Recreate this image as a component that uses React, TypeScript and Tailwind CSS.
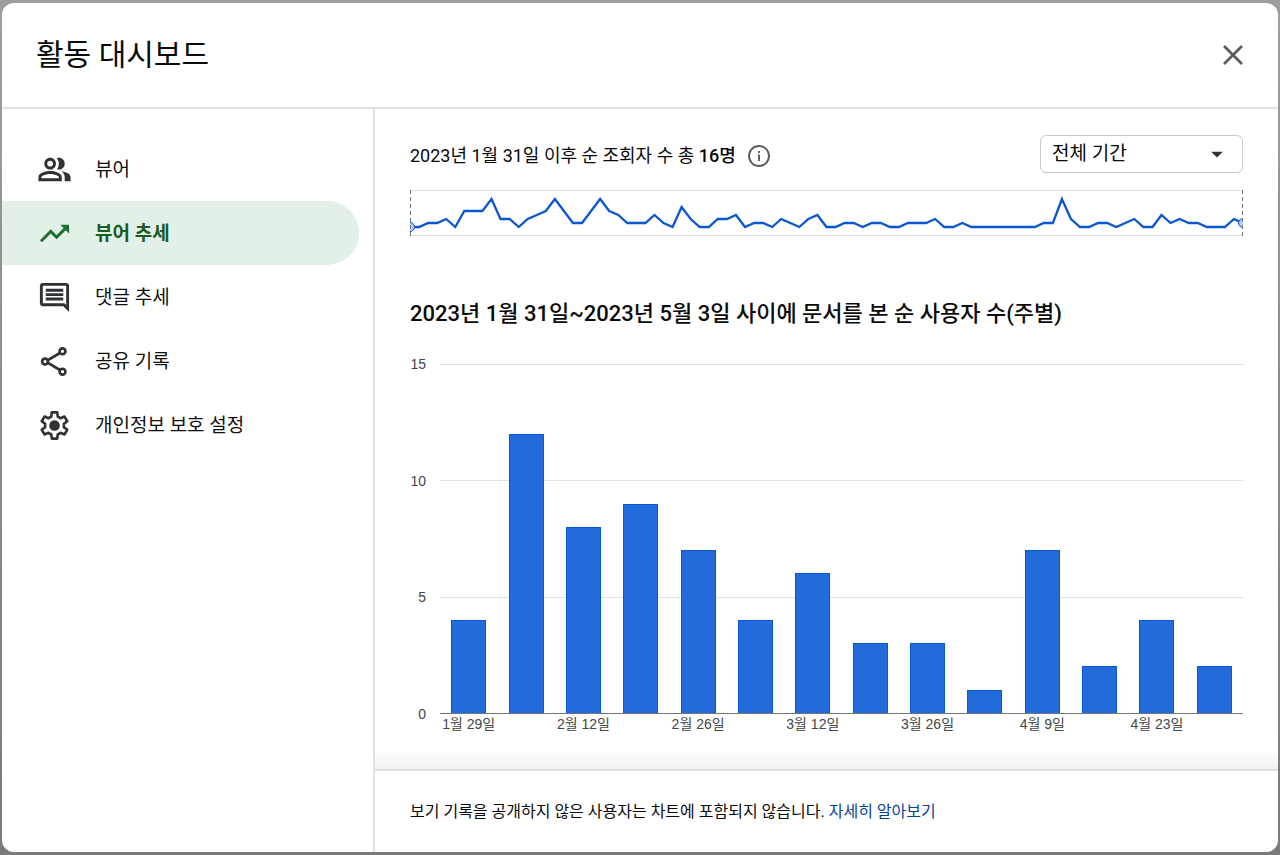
import { MdArrowDropDown, MdOutlineComment, MdOutlinePeopleAlt, MdTrendingUp } from "react-icons/md";

const ShareIcon: React.FC<{ className?: string }> = ({ className }) => {
  return (
    <svg viewBox="0 0 24 24" className={className} fill="none" stroke="currentColor" strokeWidth="1.8" aria-hidden="true">
      <path d="M7.500 11 16 6M7.500 13 16 18" />
      <circle cx="17.500" cy="5" r="2" />
      <circle cx="5.500" cy="12" r="2" />
      <circle cx="17.500" cy="19" r="2" />
    </svg>
  );
};

const SettingsIcon: React.FC<{ className?: string }> = ({ className }) => {
  return (
    <svg viewBox="0 -960 960 960" className={className} aria-hidden="true">
      <path
        d="M405-840H555L570-723Q612-711 646-679L755-725 830-596 735-524Q745-480 735-436L830-364 755-235 646-281Q612-249 570-237L555-120H405L390-237Q348-249 314-281L205-235 130-364 225-436Q215-480 225-524L130-596 205-725 314-679Q348-711 390-723Z"
        fill="none"
        stroke="currentColor"
        strokeWidth="72"
        strokeLinejoin="round"
      />
      <circle cx="480" cy="-480" r="145" fill="currentColor" />
    </svg>
  );
};

const menus = [
  { label: "뷰어", icon: MdOutlinePeopleAlt },
  { label: "뷰어 추세", icon: MdTrendingUp, active: true },
  { label: "댓글 추세", icon: MdOutlineComment },
  { label: "공유 기록", icon: ShareIcon },
  { label: "개인정보 보호 설정", icon: SettingsIcon },
];

const daily = [
  0, 0, 1, 1, 2, 0, 4, 4, 4, 7, 2, 2, 0, 2, 3, 4, 7, 4, 1, 1, 4, 7, 4, 3, 1, 1, 1, 3, 1, 0, 5,
  2, 0, 0, 2, 2, 3, 0, 1, 1, 0, 2, 1, 0, 2, 3, 0, 0, 1, 1, 0, 1, 1, 0, 0, 1, 1, 1, 2, 0, 0, 1,
  0, 0, 0, 0, 0, 0, 0, 0, 1, 1, 7, 2, 0, 0, 1, 1, 0, 1, 2, 0, 0, 3, 1, 2, 1, 1, 0, 0, 0, 2, 1,
];

const weekly = [
  { value: 4, label: "1월 29일" },
  { value: 12 },
  { value: 8, label: "2월 12일" },
  { value: 9 },
  { value: 7, label: "2월 26일" },
  { value: 4 },
  { value: 6, label: "3월 12일" },
  { value: 3 },
  { value: 3, label: "3월 26일" },
  { value: 1 },
  { value: 7, label: "4월 9일" },
  { value: 2 },
  { value: 4, label: "4월 23일" },
  { value: 2 },
];

const Sidebar: React.FC = () => {
  return (
    <nav className="w-[373px] shrink-0 border-r-2 border-[#e0e0e0] pt-7 pr-[14px]">
      {menus.map(({ label, icon: Icon, active }) => (
        <button
          key={label}
          type="button"
          aria-current={active ? "page" : undefined}
          className={
            active
              ? "flex items-center gap-[23px] w-full h-16 pl-[35px] rounded-r-full bg-[#e3f0e7] text-[19px] font-bold text-[#185c26]"
              : "flex items-center gap-[23px] w-full h-16 pl-[35px] rounded-r-full text-[19px] text-[#111111]"
          }
        >
          <Icon className={active ? "size-[35px] text-[#1e6e30]" : "size-[35px] text-[#303134]"} />
          <span className="pt-0.5">{label}</span>
        </button>
      ))}
    </nav>
  );
};

const Sparkline: React.FC = () => {
  const points = daily.map((v, i) => `${((i * 833) / 92).toFixed(1)},${37 - v * 4}`).join(" ");

  return (
    <svg viewBox="0 0 833 46" preserveAspectRatio="none" className="block w-full h-[46px]" role="img" aria-label="일별 순 조회자 수">
      <path d="M0 .5H833M0 45.500H833" stroke="#e0e0e0" />
      <polyline points={points} fill="none" stroke="#0b57d0" strokeWidth="2.300" />
      <circle cx="0" cy="37" r="4.500" fill="#aecbfa" stroke="#0b57d0" />
      <circle cx="833" cy="33" r="4.500" fill="#aecbfa" stroke="#0b57d0" />
      <path d="M.5 0V46M832.500 0V46" stroke="#757575" strokeDasharray="4 3" />
    </svg>
  );
};

const WeeklyChart: React.FC = () => {
  return (
    <div className="flex mt-6 font-['Liberation_Sans','Noto_Sans_CJK_KR',sans-serif] text-sm leading-5 text-[#444746]">
      <div className="flex flex-col justify-between w-4 h-[370px] text-right">
        <span>15</span>
        <span>10</span>
        <span>5</span>
        <span>0</span>
      </div>

      <div className="flex-1 ml-[14px] pt-[10px]">
        <div className="grid h-[350px]">
          <div className="col-start-1 row-start-1 flex flex-col justify-between">
            <div className="h-px bg-[#e0e0e0]" />
            <div className="h-px bg-[#e0e0e0]" />
            <div className="h-px bg-[#e0e0e0]" />
            <div className="h-px bg-[#757575]" />
          </div>
          <div className="col-start-1 row-start-1 grid grid-cols-14 items-end justify-items-center h-[349px]">
            {weekly.map((week, i) => (
              <div
                key={i}
                className="w-[35px] bg-[#216bdb] border border-b-0 border-[#0b57d0]"
                style={{ height: `${(week.value / 15) * 100}%` }}
              />
            ))}
          </div>
        </div>

        <div className="grid grid-cols-14 justify-items-center">
          {weekly.map((week, i) => (
            <span key={i} className="flex justify-center w-0 whitespace-nowrap">
              {week.label}
            </span>
          ))}
        </div>
      </div>
    </div>
  );
};

const App: React.FC = () => {
  return (
    <div className="flex min-h-screen px-0.5 py-[3px] bg-linear-to-b from-[#9e9e9e] to-[#7a7a7a] font-[Roboto,'Noto_Sans_CJK_KR',sans-serif] text-[#0a0a0a]">
      <div role="dialog" aria-labelledby="title" className="flex flex-col flex-1 rounded-xl bg-white overflow-hidden">
        <header className="flex items-center justify-between h-[106px] border-b-2 border-[#e0e0e0] px-[34px]">
          <h1 id="title" className="text-[30px] leading-10">활동 대시보드</h1>
          <button type="button" aria-label="닫기" className="text-[#5c5c5c]">
            <svg viewBox="0 0 22 22" className="size-[22px]" fill="none" stroke="currentColor" strokeWidth="2.800" aria-hidden="true">
              <path d="M2 2 20 20M20 2 2 20" />
            </svg>
          </button>
        </header>

        <div className="flex flex-1">
          <Sidebar />

          <main className="flex flex-col flex-1 min-w-0">
            <section className="flex-1 px-[35px] pt-[26px] bg-linear-to-t from-[#f1f1f1] to-white to-[20px]">
              <div className="flex items-center justify-between">
                <div className="flex items-center gap-3 pt-1 text-lg">
                  <p>
                    2023년 1월 31일 이후 순 조회자 수 총 <b className="font-medium">16명</b>
                  </p>
                  <button type="button" aria-label="정보" className="text-[#5c5c5c]">
                    <svg viewBox="0 0 22 22" className="size-[22px]" fill="none" stroke="currentColor" strokeWidth="1.900" aria-hidden="true">
                      <circle cx="11" cy="11" r="10" />
                      <path d="M11 9.500V16M11 6V8" />
                    </svg>
                  </button>
                </div>

                <div className="grid items-center">
                  <select
                    aria-label="기간"
                    className="col-start-1 row-start-1 appearance-none w-[203px] h-[38px] pl-[11px] rounded-md border border-[#c7cacf] bg-white text-[19px]"
                  >
                    <option>전체 기간</option>
                  </select>
                  <MdArrowDropDown className="col-start-1 row-start-1 justify-self-end mr-3 size-7 text-[#303134] pointer-events-none" />
                </div>
              </div>

              <div className="mt-[17px]">
                <Sparkline />
              </div>

              <h2 className="mt-[62px] text-[22px] leading-8 font-medium">
                2023년 1월 31일~2023년 5월 3일 사이에 문서를 본 순 사용자 수(주별)
              </h2>

              <WeeklyChart />
            </section>

            <footer className="h-[83px] flex items-center gap-1 border-t-2 border-[#e0e0e0] px-[35px] text-base">
              <p>보기 기록을 공개하지 않은 사용자는 차트에 포함되지 않습니다.</p>
              <a href="#" className="text-[#0842a0]">자세히 알아보기</a>
            </footer>
          </main>
        </div>
      </div>
    </div>
  );
};

export default App;
